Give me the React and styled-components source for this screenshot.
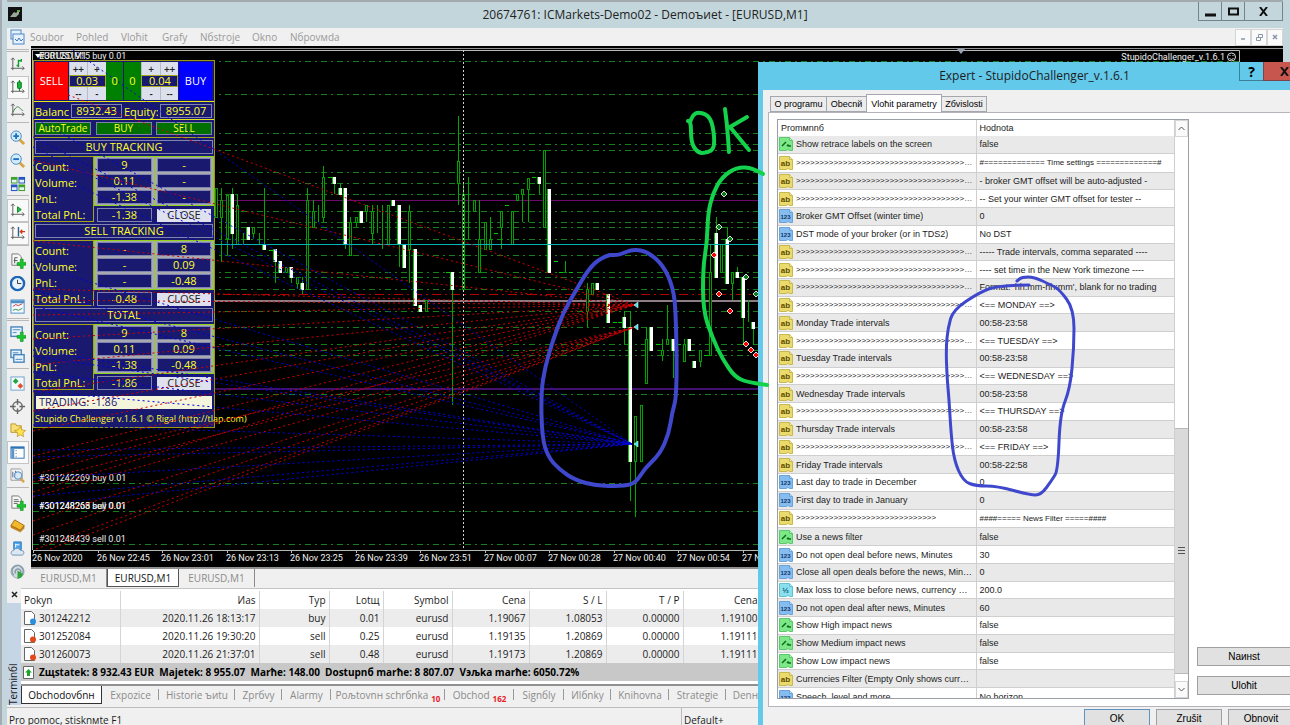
import React from "react";
import styled, { createGlobalStyle, css } from "styled-components";

const GlobalStyle = createGlobalStyle`
  * {
    box-sizing: border-box;
  }
  body {
    margin: 0;
    overflow: hidden;
    font-family: "Open Sans", "Noto Sans", sans-serif;
    font-size: 10px;
    color: #1c1c1c;
  }
  button,
  input {
    font: inherit;
    padding: 0;
    margin: 0;
    border-radius: 0;
  }
  table {
    border-collapse: collapse;
  }
`;

const Desktop = styled.div`
  position: relative;
  height: 100vh;
  overflow: hidden;
`;

const MainWindow = styled.main`
  display: flex;
  flex-direction: column;
  height: 100%;
  padding: 0 7px 0 5px;
  background: #c2d6dc;
  border-left: 2px solid #a4abb2;
`;

const TitleBar = styled.header`
  display: grid;
  grid-template-columns: 90px 1fr 90px;
  flex: none;
  height: 28px;
  border-top: 2px solid #a2aaae;
`;

const AppLogo = styled.svg`
  margin: 5px 0 0 1px;
`;

const WindowTitle = styled.h1`
  margin: 0;
  font-size: 12px;
  line-height: 26px;
  font-weight: 400;
  text-align: center;
  color: #222;
`;

const CaptionButtons = styled.div`
  display: flex;
  height: 19px;
  justify-content: flex-end;
`;

const CaptionButton = styled.button`
  display: flex;
  align-items: center;
  justify-content: center;
  width: ${props => props.$width || 24}px;
  margin-left: -1px;
  background: ${props => props.$bg || "transparent"};
  border: 1px solid ${props => props.$line || "#75838a"};
  border-top: 0;
`;

const MenuBar = styled.nav`
  display: flex;
  flex: none;
  align-items: center;
  height: 18px;
  background: #f0f0f0;
  padding-left: 3px;
`;

const MenuLink = styled.a`
  width: ${props => props.$width}px;
  color: #9a9a9a;
  text-decoration: none;
  font-size: 10px;
  line-height: 18px;
`;

const MdiButtons = styled.div`
  display: flex;
  margin-left: auto;
`;

const MdiButton = styled.button`
  display: flex;
  align-items: center;
  justify-content: center;
  width: 16px;
  height: 17px;
  background: #fafafa;
  border: 1px solid #d5d5d5;
`;

const Workspace = styled.div`
  display: flex;
  flex: 1;
  min-height: 0;
`;

const Toolbar = styled.aside`
  display: flex;
  flex-direction: column;
  flex: none;
  width: 24px;
  padding-top: 3px;
  background: #f0f0f0;
`;

const ToolDivider = styled.div`
  flex: none;
  height: 4px;
  margin-right: 2px;
  border-top: ${props => (props.$grip ? "3px double" : "1px solid")} #b8b8b8;
`;

const ToolButton = styled.button`
  display: flex;
  flex: none;
  align-items: center;
  justify-content: center;
  height: 23px;
  margin-right: 2px;
  background: ${props => (props.$pressed ? "#f9f9f9" : "transparent")};
  border: 1px solid ${props => (props.$pressed ? "#c4c4c4" : "transparent")};
`;

const ChartColumn = styled.section`
  display: flex;
  flex-direction: column;
  flex: 1;
  min-width: 0;
`;

const ChartArea = styled.div`
  position: relative;
  flex: 1;
  min-height: 0;
  overflow: hidden;
  background: #000;
`;

const ChartSvg = styled.svg`
  position: absolute;
  left: 0;
  top: 0;
  pointer-events: none;
  font-family: Roboto, "Open Sans", sans-serif;
`;

const ChartTabs = styled.div`
  display: flex;
  flex: none;
  height: 21px;
  background: #f0f0f0;
  border-top: 2px solid #8f9090;
`;

const ChartTab = styled.button`
  width: ${props => (props.$active ? 72 : 76)}px;
  height: 18px;
  border: 0;
  font-size: 10px;
  color: ${props => (props.$active ? "#111" : "#8b8b8b")};
  background: ${props => (props.$active ? "#fff" : "transparent")};
  ${props =>
    props.$active
      ? css`
          border: 1px solid #555;
          border-top: 0;
        `
      : css`
          border-right: 1px solid #8c8c8c;
        `}
`;

/* ---- trade panel ---- */

const TradePanel = styled.div`
  position: absolute;
  left: 2px;
  top: 14px;
  width: 182px;
  height: 368px;
  background: #191970;
  border: 1px solid #9a9a10;
  color: #ffff28;
  font-size: 11px;
  line-height: 14px;
`;

const PanelStrip = styled.div`
  display: flex;
  align-items: center;
  justify-content: space-between;
  height: ${props => props.$height || 18}px;
  padding: 0 2px 0 1px;
  border-bottom: 1px solid ${props => props.$line || "#e8e81c"};
`;

const DealButton = styled.button`
  width: 33px;
  height: 38px;
  border: 0;
  color: #fff;
  background: ${props => props.$bg};
`;

const ZeroButton = styled.button`
  width: 17px;
  height: 38px;
  border: 0;
  color: #ffff28;
  background: #008000;
`;

const LotBox = styled.div`
  display: grid;
  grid-template-columns: 1fr 1fr;
  grid-template-rows: 13px 12px 13px;
  width: 37px;
  height: 38px;
`;

const StepButton = styled.button`
  border: 0;
  border-left: 1px solid #b9bcc8;
  background: #dcdfec;
  color: #222;
  font-size: 10px;
  font-weight: 600;
  line-height: 10px;
`;

const LotInput = styled.input`
  grid-column: span 2;
  width: 100%;
  min-width: 0;
  border: 1px solid #a7a720;
  background: #191970;
  color: #ffff28;
  text-align: center;
`;

const PanelValue = styled.div`
  width: ${props => (props.$width ? props.$width + "px" : "auto")};
  height: 14px;
  line-height: 12px;
  border: 1px solid #8085b0;
  text-align: center;
  background: #191970;
`;

const PanelLabel = styled.span`
  width: 34px;
  padding-top: 2px;
  overflow: hidden;
`;

const PanelToggle = styled.button`
  width: 56px;
  height: 13px;
  font-size: 10px;
  line-height: 11px;
  border: 1px solid #7c84a8;
  background: #007000;
  color: #ffff28;
`;

const PanelHeading = styled.div`
  height: 18px;
  padding: 2px 1px;
`;

const Stats = styled.div`
  display: grid;
  grid-template-columns: 60px 1fr;
  height: 66px;
`;

const StatLabels = styled.div`
  height: 66px;
  padding: 2px 0 0 1px;
  border: 1px solid #a5a51c;
  border-left: 0;
  line-height: 16px;
  white-space: nowrap;
`;

const StatGrid = styled.div`
  display: grid;
  grid-template-columns: 1fr 1fr;
  height: 50px;
  border: 1px solid #8fd018;
`;

const StatCell = styled.div`
  padding: 1px 2px;
  height: 16px;
  background: ${props => (props.$total ? "transparent" : "#a9a9b0")};
  &:nth-child(even) {
    border-left: 1px solid ${props => (props.$total ? "transparent" : "#8fd018")};
  }
`;

const StatTotals = styled.div`
  display: grid;
  grid-template-columns: 1fr 1fr;
  padding: 1px 1px 0;
`;

const CloseButton = styled.button`
  width: 100%;
  height: 13px;
  line-height: 12px;
  border: 0;
  background: #dfe2ee;
  color: #222;
`;

const TradingState = styled.div`
  height: 13px;
  margin: 6px 2px 0;
  padding-left: 3px;
  line-height: 12px;
  background: #f5f5dc;
  color: #191970;
`;

const PanelCredit = styled.div`
  padding: 3px 1px;
  font-size: 9px;
  white-space: nowrap;
`;

/* ---- terminal ---- */

const Terminal = styled.section`
  display: flex;
  flex: none;
  height: 119px;
  background: #f0f0f0;
`;

const TerminalSide = styled.div`
  display: flex;
  flex-direction: column;
  width: 14px;
  gap: 3px;
`;

const SideClose = styled.button`
  height: 12px;
  border: 0;
  background: none;
  line-height: 8px;
`;

const SideCaption = styled.div`
  flex: 1;
  writing-mode: vertical-rl;
  transform: rotate(180deg);
  line-height: 13px;
  margin-bottom: 2px;
  background: #c5d5e6;
`;

const TerminalBody = styled.div`
  flex: 1;
  min-width: 0;
  overflow: hidden;
  padding-top: 2px;
  background: #fff;
  border-top: 1px solid #c4c4c4;
`;

const OrderTable = styled.table`
  width: 100%;
  table-layout: fixed;
  line-height: 16px;
  th,
  td {
    height: 18px;
    padding: 0 3px;
    text-align: right;
    font-weight: 400;
    white-space: nowrap;
    border-right: 1px solid #d4d4d4;
  }
  th:first-child,
  td:first-child {
    text-align: left;
  }
  tbody tr:nth-child(odd) {
    background: #ececec;
  }
`;

const OrderId = styled.span`
  display: flex;
  align-items: center;
  gap: 3px;
`;

const BalanceRow = styled.div`
  display: flex;
  align-items: center;
  gap: 5px;
  height: 18px;
  padding-left: 2px;
  background: #c8c8c8;
  color: #000;
  font-weight: 700;
  white-space: pre;
`;

const TerminalTabs = styled.div`
  display: flex;
  height: 26px;
  margin-top: 3px;
  background: #f0f0f0;
  border-top: 2px solid #8f9090;
`;

const TerminalTab = styled.button`
  position: relative;
  flex: none;
  width: ${props => props.$width}px;
  height: 18px;
  border: 0;
  color: ${props => (props.$active ? "#111" : "#8b8b8b")};
  background: ${props => (props.$active ? "#fff" : "transparent")};
  ${props =>
    props.$active &&
    css`
      border: 1px solid #333;
      border-top: 0;
    `}
  &:not(:first-child)::after {
    content: "";
    position: absolute;
    right: 0;
    top: 3px;
    height: 11px;
    border-right: 1px solid #999;
  }
  sub {
    margin-left: 3px;
    font-size: 8px;
    font-weight: 700;
    line-height: 8px;
    color: #e8202a;
  }
`;

const StatusBar = styled.footer`
  display: flex;
  flex: none;
  height: 18px;
  background: #f0f0f0;
  border-top: 1px solid #bdbdbd;
  line-height: 25px;
  white-space: nowrap;
  overflow: hidden;
`;

const StatusCell = styled.span`
  width: ${props => props.$width}px;
  padding-left: 2px;
  border-right: 1px solid #bbb;
`;

/* ---- expert dialog ---- */

const Dialog = styled.section`
  position: absolute;
  left: 758px;
  top: 62px;
  width: 548px;
  height: 690px;
  padding-left: 5px;
  background: #63c9ea;
  font-family: "Liberation Sans", sans-serif;
  font-size: 9px;
  color: #1c1c1c;
`;

const DialogTitle = styled.div`
  display: grid;
  grid-template-columns: 68px 1fr 68px;
  height: 28px;
  h2 {
    margin: 0;
    font: 400 12px/27px "Open Sans", "Noto Sans", sans-serif;
    text-align: center;
  }
`;

const HelpMark = styled.b`
  font: 700 14px "Open Sans", sans-serif;
`;

const DialogBody = styled.div`
  height: 662px;
  padding: 4px 0 0 5px;
  background: #f0f0f0;
`;

const DialogTabs = styled.div`
  display: flex;
  align-items: flex-end;
  height: 18px;
  padding-left: 3px;
`;

const DialogTab = styled.button`
  width: ${props => props.$width}px;
  height: ${props => (props.$active ? 18 : 16)}px;
  margin-left: -1px;
  border: 1px solid #a4a8ac;
  border-bottom: ${props => (props.$active ? 0 : "1px solid #a4a8ac")};
  background: ${props => (props.$active ? "#fff" : "#ececec")};
`;

const TabPage = styled.div`
  display: flex;
  gap: 8px;
  height: 595px;
  padding: 6px 0 0 8px;
  background: #fff;
  border: 1px solid #b4b4ba;
`;

const ParamBox = styled.div`
  display: flex;
  width: 412px;
  height: 580px;
  overflow: hidden;
  border: 1px solid #9a9ea6;
`;

const ParamTable = styled.table`
  flex: none;
  width: 396px;
  height: 586px;
  table-layout: fixed;
  th,
  td {
    padding: 0 3px;
    border-right: 1px solid #cfcfcf;
    border-bottom: 1px solid #cfcfcf;
    text-align: left;
    font-weight: 400;
    line-height: 14px;
    overflow: hidden;
    white-space: nowrap;
    text-overflow: ellipsis;
  }
  th {
    height: 16px;
    border-bottom: 0;
  }
  tbody tr:nth-child(odd) {
    background: #e9e9e9;
  }
  td:first-child {
    padding-left: 1px;
  }
`;

const ParamName = styled.span`
  display: flex;
  align-items: center;
  gap: 3px;
`;

const ParamGlyph = styled.svg`
  flex: none;
`;

const ParamText = styled.span`
  overflow: hidden;
  text-overflow: ellipsis;
  font-size: ${props => (props.$ruler ? 8 : 9)}px;
`;

const Scrollbar = styled.div`
  display: flex;
  flex-direction: column;
  width: 14px;
  height: 578px;
  background: #fff;
`;

const ScrollButton = styled.button`
  display: flex;
  align-items: center;
  justify-content: center;
  height: 17px;
  border: 1px solid #d6d6d6;
  background: #fafafa;
`;

const ScrollThumb = styled.div`
  display: flex;
  align-items: center;
  justify-content: center;
  height: 246px;
  margin: 291px 0 auto;
  background: #dadada;
  border-top: 1px solid #b9b9b9;
  border-bottom: 1px solid #b9b9b9;
`;

const SideButtons = styled.div`
  display: flex;
  flex-direction: column;
  justify-content: flex-end;
  gap: 10px;
  padding-bottom: 11px;
`;

const PushButton = styled.button`
  width: ${props => props.$width}px;
  height: 19px;
  border: 1px solid ${props => (props.$primary ? "#5c93c0" : "#a0a0a0")};
  background: #e1e1e1;
  font-size: 10px;
`;

const DialogButtons = styled.div`
  display: flex;
  gap: 6px;
  padding: 2px 0 0 316px;
`;

const Markup = styled.svg`
  position: absolute;
  left: 0;
  top: 0;
  pointer-events: none;
`;

const menu = [
  ["Soubor", 46],
  ["Pohled", 45],
  ["Vloћit", 41],
  ["Grafy", 38],
  ["Nбstroje", 52],
  ["Okno", 38],
  ["Nбpovмda", 60]
];

const orders = [
  ["301242212", "2020.11.26 18:13:17", "buy", "0.01", "eurusd", "1.19067", "1.08053", "0.00000", "1.19100"],
  ["301252084", "2020.11.26 19:30:20", "sell", "0.25", "eurusd", "1.19135", "1.20869", "0.00000", "1.19111"],
  ["301260073", "2020.11.26 21:37:01", "sell", "0.48", "eurusd", "1.19173", "1.20869", "0.00000", "1.19111"]
];

const orderColumns = [
  ["Pokyn", 99],
  ["Иas", 139],
  ["Typ", 70],
  ["Lotщ", 54],
  ["Symbol", 69],
  ["Cena", 77],
  ["S / L", 77],
  ["T / P", 77],
  ["Cena", 78]
];

const terminalTabs = [
  ["Obchodovбnн", 81],
  ["Expozice", 57],
  ["Historie ъиtu", 76],
  ["Zprбvy", 47],
  ["Alarmy", 49],
  ["Poљtovnн schrбnka", 114, "10"],
  ["Obchod", 69, "162"],
  ["Signбly", 50],
  ["Иlбnky", 47],
  ["Knihovna", 58],
  ["Strategie", 57],
  ["Denнk", 44]
];

const arrows = ">".repeat(60);

const params = [
  ["bool", "Show retrace labels on the screen", "false"],
  ["ab", arrows, "#============= Time settings =============#"],
  ["ab", arrows, "- broker GMT offset will be auto-adjusted -"],
  ["ab", arrows, "-- Set your winter GMT offset for tester --"],
  ["int", "Broker GMT Offset (winter time)", "0"],
  ["int", "DST mode of your broker (or in TDS2)", "No DST"],
  ["ab", arrows, "----- Trade intervals, comma separated ----"],
  ["ab", arrows, "---- set time in the New York timezone ----"],
  ["ab", arrows, "Format: 'hh:mm-hh:mm', blank for no trading"],
  ["ab", arrows, "<== MONDAY ==>"],
  ["ab", "Monday Trade intervals", "00:58-23:58"],
  ["ab", arrows, "<== TUESDAY ==>"],
  ["ab", "Tuesday Trade intervals", "00:58-23:58"],
  ["ab", arrows, "<== WEDNESDAY ==>"],
  ["ab", "Wednesday Trade intervals", "00:58-23:58"],
  ["ab", arrows, "<== THURSDAY ==>"],
  ["ab", "Thursday Trade intervals", "00:58-23:58"],
  ["ab", arrows, "<== FRIDAY ==>"],
  ["ab", "Friday Trade intervals", "00:58-22:58"],
  ["int", "Last day to trade in December", "0"],
  ["int", "First day to trade in January", "0"],
  ["ab", ">".repeat(30), "####===== News Filter =====####"],
  ["bool", "Use a news filter", "false"],
  ["int", "Do not open deal before news, Minutes", "30"],
  ["int", "Close all open deals before the news, Minutes", "0"],
  ["half", "Max loss to close before news, currency per lot", "200.0"],
  ["int", "Do not open deal after news, Minutes", "60"],
  ["bool", "Show High impact news", "false"],
  ["bool", "Show Medium impact news", "false"],
  ["bool", "Show Low impact news", "false"],
  ["ab", "Currencies Filter (Empty Only shows currencies)", ""],
  ["int", "Speech, level and more", "No horizon"]
];

// x, high, body top, body bottom, low, filled
const candles = [
  [216, 188, 188, 217, 217], [221, 188, 200, 217, 262], [227, 195, 195, 238, 255],
  [232, 188, 194, 233, 249, 1], [237, 194, 205, 244, 244], [243, 233, 0, 0, 244],
  [248, 227, 227, 239, 239, 1], [253, 227, 227, 233, 239], [259, 233, 0, 0, 244],
  [264, 188, 244, 249, 249, 1], [270, 250, 0, 0, 250], [275, 249, 249, 261, 283, 1],
  [280, 261, 261, 272, 272, 1], [286, 267, 267, 272, 272], [291, 267, 267, 277, 283, 1],
  [297, 277, 277, 283, 289], [302, 277, 283, 289, 294, 1], [307, 188, 200, 289, 289],
  [313, 200, 211, 227, 227], [318, 205, 0, 0, 222], [323, 166, 177, 217, 222],
  [329, 177, 0, 0, 177], [334, 177, 177, 183, 194, 1], [340, 183, 188, 194, 194, 1],
  [345, 188, 188, 244, 249, 1], [350, 217, 222, 255, 255], [356, 217, 217, 222, 227],
  [361, 211, 211, 222, 222, 1], [366, 205, 205, 211, 222], [372, 205, 211, 233, 244],
  [377, 205, 0, 0, 233], [382, 205, 0, 0, 249], [388, 205, 205, 244, 244],
  [393, 200, 200, 205, 205, 1], [399, 205, 205, 244, 267, 1], [404, 244, 244, 267, 267, 1],
  [409, 205, 211, 249, 283], [415, 249, 249, 305, 305, 1], [420, 305, 305, 311, 311, 1],
  [426, 300, 300, 311, 311], [447, 272, 0, 0, 272], [452, 272, 272, 289, 405, 1],
  [458, 116, 161, 183, 205], [463, 183, 194, 289, 289], [468, 177, 0, 0, 239],
  [474, 200, 200, 211, 211], [479, 200, 239, 272, 272], [485, 222, 222, 249, 249],
  [490, 217, 239, 249, 249], [495, 233, 0, 0, 233], [501, 211, 211, 227, 249],
  [506, 205, 0, 0, 205], [512, 211, 211, 244, 244], [517, 194, 194, 200, 200],
  [522, 189, 189, 194, 222], [528, 178, 178, 189, 222], [533, 177, 0, 0, 177],
  [539, 177, 177, 183, 194, 1], [544, 150, 150, 227, 227], [549, 189, 189, 272, 272, 1],
  [555, 261, 0, 0, 261], [560, 272, 0, 0, 272], [565, 261, 0, 0, 272], [570, 272, 0, 0, 272],
  [587, 283, 289, 311, 327], [592, 283, 283, 294, 294], [597, 283, 283, 289, 289, 1],
  [608, 294, 294, 322, 322, 1], [614, 322, 0, 0, 322], [619, 322, 0, 0, 322],
  [624, 311, 317, 327, 345, 1], [630, 311, 327, 461, 501, 1], [635, 416, 416, 461, 517],
  [641, 405, 405, 461, 461], [646, 327, 339, 383, 383], [651, 327, 327, 350, 350, 1],
  [657, 344, 0, 0, 344], [662, 339, 350, 355, 361], [667, 305, 339, 344, 344],
  [673, 339, 339, 350, 378, 1], [678, 344, 0, 0, 344], [684, 339, 344, 361, 361],
  [689, 339, 339, 350, 350, 1], [694, 361, 361, 367, 367, 1], [700, 350, 350, 361, 367],
  [705, 355, 0, 0, 355], [710, 244, 272, 355, 355], [716, 217, 233, 277, 277, 1],
  [721, 244, 244, 272, 272], [727, 227, 239, 283, 283, 1], [732, 272, 272, 283, 300],
  [737, 267, 272, 277, 277, 1], [743, 277, 277, 317, 344, 1], [748, 300, 0, 0, 322],
  [753, 322, 322, 328, 345, 1]
];

const levels = [
  61, 94, 133, 144, 150, 172, 183, 194, 211, 222, 227, 239, 255, 272, 277, 289,
  311, 327, 344, 350, 355, 394, 483, 511, 544
];

// start x, start y of every trade link; each group ends in one point
const links = [
  {
    color: "#d00000",
    end: [635, 305],
    from: [
      [68, 95], [33, 160], [33, 241], [33, 289], [33, 300], [33, 315], [33, 339],
      [33, 365], [33, 392], [33, 411], [33, 431], [33, 456], [33, 475], [33, 492]
    ]
  },
  {
    color: "#d00000",
    end: [635, 327],
    from: [[33, 463], [33, 482], [33, 497], [33, 521], [33, 535], [36, 549], [50, 549]]
  },
  {
    color: "#0000e0",
    end: [632, 444],
    from: [
      [73, 50], [33, 118], [33, 137], [33, 147], [33, 165], [33, 265], [33, 290],
      [33, 306], [33, 350], [33, 356], [33, 372], [33, 391], [33, 425],
      [33, 450], [33, 457], [33, 478], [33, 496], [33, 505]
    ]
  }
];

const times = [
  "26 Nov 2020", "26 Nov 22:45", "26 Nov 23:01", "26 Nov 23:13", "26 Nov 23:25",
  "26 Nov 23:39", "26 Nov 23:51", "27 Nov 00:07", "27 Nov 00:28", "27 Nov 00:40",
  "27 Nov 00:54", "27 Nov 01:10"
];

const diamonds = [
  [724, 194, "#0a7a20"], [719, 227, "#0a7a20"], [730, 239, "#0a7a20"], [746, 277, "#0a7a20"],
  [756, 294, "#0a7a20"], [714, 255, "#f00"], [719, 294, "#f00"], [730, 311, "#f00"],
  [746, 344, "#f00"], [751, 350, "#f00"], [756, 355, "#f00"]
];

const Axes = () => <path d="M3 1v13M1 12h14M1 3l2-2 2 2M13 10l2 2-2 2" stroke="#5c5c5c" fill="none" />;
const Plus = () => <path d="M7.500 10h3.500v-3.500h3v3.500h3v3h-3v3.500h-3v-3.500h-3.500z" fill="#19c52c" stroke="#0b8a1a" strokeWidth=".6" />;

const toolIcons = {
  bars: <><Axes /><path d="M9 3v8M9 4h3M7 9h2M12 2v3" stroke="#12a02c" fill="none" strokeWidth="1.500" /></>,
  candles: <><Axes /><path d="M10 0v12" stroke="#067a1a" /><rect x="8" y="2" width="4" height="7" rx="1" fill="#16b93a" stroke="#067a1a" /></>,
  line: <><Axes /><path d="M3 10c3-6 5-7 7-5s3 3 4 3" stroke="#2f7c3f" fill="none" /></>,
  zoomIn: <><path d="M10 10l5 5" stroke="#d9a441" strokeWidth="3" /><circle cx="6.500" cy="6.500" r="5.500" fill="#d3ecfb" stroke="#3f87c8" /><path d="M6.500 3.500v6M3.500 6.500h6" stroke="#1d6fc0" strokeWidth="2" /></>,
  zoomOut: <><path d="M10 10l5 5" stroke="#d9a441" strokeWidth="3" /><circle cx="6.500" cy="6.500" r="5.500" fill="#d3ecfb" stroke="#3f87c8" /><path d="M3.500 6.500h6" stroke="#1d6fc0" strokeWidth="2" /></>,
  tile: <><rect x="1" y="1" width="7" height="7" fill="#3fa327" /><rect x="9" y="1" width="7" height="7" fill="#2557c4" /><rect x="1" y="9" width="7" height="7" fill="#2557c4" /><rect x="9" y="9" width="7" height="7" fill="#3fa327" /><path d="M2 4h5v3H2zM10 4h5v3h-5zM2 12h5v3H2zM10 12h5v3h-5z" fill="#e8f2fb" /></>,
  scroll: <><Axes /><path d="M8 4l4 3-4 3z" fill="#2bc247" stroke="#0f8a28" /></>,
  shift: <><Axes /><path d="M9 1v10" stroke="#2b5f8c" strokeWidth="1.500" /><path d="M16 6h-5M13 4l-2 2 2 2" stroke="#d23b12" fill="none" strokeWidth="1.500" /></>,
  indicator: <><path d="M2 1h7l3 3v9H2z" fill="#f7f7f7" stroke="#777" /><path d="M5 11V5h3M4 8h4" stroke="#555" fill="none" /><Plus /></>,
  clock: <><circle cx="8" cy="8" r="7" fill="#e9f4fd" stroke="#1c66b5" strokeWidth="2.500" /><path d="M8 4v4h4" stroke="#333" fill="none" /></>,
  template: <><rect x="1" y="1" width="14" height="14" fill="#f3f9fe" stroke="#4c8ec6" /><path d="M1 3h14" stroke="#4c8ec6" strokeWidth="3" /><path d="M3 8l3-2 3 1 4-2" stroke="#c33" fill="none" /><path d="M3 12l3-1 3 1 4-2" stroke="#2a8f3c" fill="none" /></>,
  newChart: <><rect x="1" y="1" width="12" height="10" fill="#e9f3fb" stroke="#4787bd" strokeWidth="1.500" /><path d="M3 4h8M3 7h4" stroke="#4787bd" /><Plus /></>,
  profiles: <><rect x="1" y="1" width="11" height="8" fill="#e9f3fb" stroke="#4787bd" strokeWidth="1.500" /><rect x="4" y="6" width="11" height="8" fill="#e9f3fb" stroke="#4787bd" strokeWidth="1.500" /><path d="M6 11h7M3 4h6" stroke="#4787bd" /></>,
  market: <><rect x="1" y="1" width="14" height="14" fill="#f4f9fd" stroke="#6ea3cf" /><path d="M6 2.500l3 3L6 8.500 3 5.500z" fill="#21a63b" /><path d="M11 7.500l3 3-3 3-3-3z" fill="#e0532c" /></>,
  cross: <><circle cx="8" cy="8" r="5" fill="none" stroke="#666" strokeWidth="1.500" /><path d="M8 0v6M8 10v6M0 8h6M10 8h6" stroke="#666" strokeWidth="1.500" /></>,
  navigator: <><path d="M1 2h5l1 2h5v7H1z" fill="#f7df7c" stroke="#bf962a" /><path d="M11 5l1.700 3.500 3.800.5-2.800 2.600.7 3.900-3.400-1.900-3.400 1.900.7-3.900L4.500 9l3.800-.5z" fill="#ffe24b" stroke="#b98a17" strokeWidth=".7" /></>,
  terminal: <><rect x="1" y="2" width="14" height="12" fill="#fff" stroke="#2f75b5" /><path d="M1 3h14" stroke="#2f75b5" strokeWidth="2" /><path d="M3 4v10" stroke="#5b95cc" strokeWidth="3" /><path d="M6 6h1M6 9h1M6 12h1" stroke="#555" /></>,
  tester: <><path d="M1 1h10l2 2v10H1z" fill="#f4f4f4" stroke="#999" /><path d="M3 4v6M6 3v7" stroke="#558" /><path d="M11 11l4 4" stroke="#d9a441" strokeWidth="2.500" /><circle cx="8.500" cy="8" r="4" fill="#cfe6f8" fillOpacity=".8" stroke="#4b8cc4" /></>,
  order: <><path d="M2 1h7l3 3v10H2z" fill="#f7f7f7" stroke="#777" /><path d="M4 5h5M4 7h6M4 9h4" stroke="#666" /><Plus /></>,
  editor: <><path d="M5 2l10 6-4 5L1 8z" fill="#f2b92d" stroke="#a06b0a" /><path d="M1 8l10 5 4-5v3l-4 4L1 10z" fill="#c8861a" stroke="#a06b0a" strokeWidth=".5" /></>,
  cloud: <><path d="M4 1h8v8H4z" fill="#4ea5ea" stroke="#2b78bd" /><path d="M6 3v4M6 4h4" stroke="#fff" /><path d="M3 15c-3-1-2-5 1-5 1-3 6-3 7 0 4-1 5 4 2 5z" fill="#dbe7f3" stroke="#6d93b8" /></>,
  signal: <><circle cx="8" cy="8" r="7" fill="#cfd9de" stroke="#9fb0ba" /><path d="M4 12a6 6 0 1 1 9-1M6 10a3 3 0 1 1 5 0" fill="none" stroke="#7f97a5" strokeWidth="1.300" /><path d="M8 7v9a8 8 0 0 0 6-5z" fill="#2fa43b" /></>
};

const tools = [
  ["bars"], ["candles", 1], ["line"], "-",
  ["zoomIn"], ["zoomOut"], ["tile"], "-",
  ["scroll", 1], ["shift", 1], "-",
  ["indicator"], ["clock"], ["template"], "=",
  ["newChart"], ["profiles"], "-",
  ["market"], ["cross"], ["navigator"], ["terminal", 1], ["tester"], "-",
  ["order"], ["editor"], ["cloud"], ["signal"]
];

const paramColors = {
  ab: ["#eadb6c", "#c9b84e", "#5c4c00"],
  int: ["#86bdf0", "#6ba3d8", "#0e3568"],
  bool: ["#7de888", "#5cc86c", "#0c6a1c"],
  half: ["#8ae0ee", "#64bfce", "#0d5c72"]
};

function ParamIcon({ kind }) {
  const [fill, line, ink] = paramColors[kind];
  const label = { ab: "ab", int: "123", half: "½" }[kind];
  return (
    <ParamGlyph width="14" height="14" viewBox="0 0 14 14">
      <path d="M.5.5h10l3 3v10H11l-2-1-2 1H.5z" fill={fill} stroke={line} />
      <path d="M10.500.5v3h3" fill="#fff" fillOpacity=".5" stroke={line} />
      {kind === "bool" ? (
        <path d="M3 9l4-4M8 9l1-1 1 1h2" stroke={ink} strokeWidth="1.500" fill="none" />
      ) : (
        <text x="6.500" y="10" textAnchor="middle" fontSize={kind === "int" ? 6 : 8} fontWeight="700" fill={ink} fontFamily="Liberation Sans">
          {label}
        </text>
      )}
    </ParamGlyph>
  );
}

function Candle({ data }) {
  const [x, high, top, bottom, low, filled] = data;
  return (
    <g stroke="#00c800" shapeRendering="crispEdges">
      {high === low ? (
        <path d={`M${x - 1} ${high + 0.5}h4`} />
      ) : (
        <path d={`M${x + 0.5} ${high}V${low}`} stroke="#00a800" />
      )}
      {top > 0 && (
        <rect x={x - 0.5} y={top + 0.5} width="2" height={bottom - top} fill={filled ? "#fff" : "#000"} stroke={filled ? "#fff" : "#00a000"} />
      )}
      {filled && <path d={`M${x - 1.5} ${top}V${bottom + 1}`} stroke="#00c800" />}
    </g>
  );
}

function Chart() {
  return (
    <ChartSvg width="1252" height="521" viewBox="31 46 1252 521">
      <path d="M31 48.500H1283" stroke="#8f9396" strokeWidth="1" />
      <path d="M32.500 550V50M33 50.500H1239.500V567" stroke="#b8b8b8" fill="none" />
      {levels.map(y => (
        <path key={y} d={`M33 ${y + 0.5}H1239`} stroke="#158018" strokeDasharray="6 4 2 4" />
      ))}
      <path d="M33 294.500H1239" stroke="#b40000" strokeDasharray="9 4 2 4" />
      <path d="M33 200.500H1239" stroke="#6e0a6e" />
      <path d="M33 301H1239" stroke="#8d7c86" strokeWidth="2" />
      <path d="M33 389H1239" stroke="#42116e" strokeWidth="2" />
      {candles.map(candle => (
        <Candle key={candle[0]} data={candle} />
      ))}
      <path d="M33 244.500H1239" stroke="#00b4b4" />
      <path d="M463.500 50V549" stroke="#d0d0d0" strokeDasharray="2 2" />
      <path d="M33 550.500H1239" stroke="#b8b8b8" />
      <path d="M957 49h8l-4 5z" fill="#9aa4b4" />
      <g fill="#f0f0f0" fontSize="9">
        <path d="M35 54h6l-3 4z" fill="#fff" />
        <text x="39" y="59">EURUSD,M1</text>
        <text x="39" y="59">#301251915 buy 0.01</text>
        <text x="39" y="481">#301242269 buy 0.01</text>
        <text x="39" y="509">#301248268 buy 0.01</text>
        <text x="39" y="509">#301248265 sell 0.01</text>
        <text x="39" y="542">#301248439 sell 0.01</text>
        <text x="1225" y="60" textAnchor="end">StupidoChallenger_v.1.6.1</text>
        {times.map((time, i) => (
          <text key={time} x={32 + Math.round(i * 64.5)} y="561">{time}</text>
        ))}
      </g>
      {times.map((time, i) => (
        <path key={time} d={`M${33.5 + Math.round(i * 64.5)} 550v3`} stroke="#b8b8b8" />
      ))}
      <g stroke="#ddd" fill="none">
        <circle cx="1231.500" cy="57" r="4" />
        <path d="M1229.500 58.500q2 2 4 0M1230 55v1M1233 55v1" />
      </g>
    </ChartSvg>
  );
}

function TradeLinks() {
  return (
    <ChartSvg width="1252" height="521" viewBox="31 46 1252 521">
      {links.map(group =>
        group.from.map(([x, y]) => (
          <path
            key={`${x}-${y}`}
            d={`M${x} ${y}L${group.end[0]} ${group.end[1]}`}
            stroke={group.color}
            strokeDasharray="2 3"
          />
        ))
      )}
      {[305, 327, 444].map(y => (
        <path key={y} d={`M634 ${y}l4-3v6z`} fill="#38e8f4" stroke="#fff" strokeWidth=".5" />
      ))}
      {diamonds.map(([x, y, color]) => (
        <path key={`${x}-${y}`} d={`M${x - 3} ${y}l3-3 3 3-3 3z`} fill={color} stroke="#ddd" />
      ))}
    </ChartSvg>
  );
}

function LotControl({ value, label, reversed }) {
  const step = reversed ? ["+", "++", "-", "--"] : ["++", "+", "--", "-"];
  return (
    <LotBox>
      <StepButton>{step[0]}</StepButton>
      <StepButton>{step[1]}</StepButton>
      <LotInput aria-label={label} defaultValue={value} />
      <StepButton>{step[2]}</StepButton>
      <StepButton>{step[3]}</StepButton>
    </LotBox>
  );
}

function StatBlock({ title, cells, total }) {
  return (
    <>
      <PanelHeading>
        <PanelValue>{title}</PanelValue>
      </PanelHeading>
      <Stats>
        <StatLabels>
          Count:
          <br />
          Volume:
          <br />
          PnL:
          <br />
          Total PnL:
        </StatLabels>
        <div>
          <StatGrid>
            {cells.map((cell, i) => (
              <StatCell key={i}>
                <PanelValue>{cell}</PanelValue>
              </StatCell>
            ))}
          </StatGrid>
          <StatTotals>
            <StatCell $total>
              <PanelValue>{total}</PanelValue>
            </StatCell>
            <StatCell $total>
              <CloseButton>CLOSE</CloseButton>
            </StatCell>
          </StatTotals>
        </div>
      </Stats>
    </>
  );
}

function Panel() {
  return (
    <TradePanel>
      <PanelStrip $height={41}>
        <DealButton $bg="#f00">SELL</DealButton>
        <LotControl value="0.03" label="Sell lots" />
        <ZeroButton>0</ZeroButton>
        <ZeroButton>0</ZeroButton>
        <LotControl value="0.04" label="Buy lots" reversed />
        <DealButton $bg="#00f">BUY</DealButton>
      </PanelStrip>
      <PanelStrip>
        <PanelLabel>Balance:</PanelLabel>
        <PanelValue $width={51}>8932.43</PanelValue>
        <PanelLabel>Equity:</PanelLabel>
        <PanelValue $width={52}>8955.07</PanelValue>
      </PanelStrip>
      <PanelStrip $line="#a5a51c">
        <PanelToggle>AutoTrade</PanelToggle>
        <PanelToggle>BUY</PanelToggle>
        <PanelToggle>SELL</PanelToggle>
      </PanelStrip>
      <StatBlock title="BUY TRACKING" cells={["9", "-", "0.11", "-", "-1.38", "-"]} total="-1.38" />
      <StatBlock title="SELL TRACKING" cells={["-", "8", "-", "0.09", "-", "-0.48"]} total="-0.48" />
      <StatBlock title="TOTAL" cells={["9", "8", "0.11", "0.09", "-1.38", "-0.48"]} total="-1.86" />
      <TradingState>TRADING: -1.86</TradingState>
      <PanelCredit>Stupido Challenger v.1.6.1 © Rigal (http://tlap.com)</PanelCredit>
    </TradePanel>
  );
}

function TerminalPane() {
  return (
    <Terminal>
      <TerminalSide>
        <SideClose aria-label="Close terminal">
          <svg width="7" height="7" viewBox="0 0 7 7">
            <path d="M1 1l5 5M6 1L1 6" stroke="#222" strokeWidth="1.500" />
          </svg>
        </SideClose>
        <SideCaption>Terminбl</SideCaption>
      </TerminalSide>
      <TerminalBody>
        <OrderTable>
          <colgroup>
            {orderColumns.map(([name, width], i) => (
              <col key={name + i} width={width} />
            ))}
            <col />
          </colgroup>
          <thead>
            <tr>
              {orderColumns.map(([name], i) => (
                <th key={name + i}>{name}</th>
              ))}
              <th />
            </tr>
          </thead>
          <tbody>
            {orders.map(order => (
              <tr key={order[0]}>
                {order.map((cell, i) => (
                  <td key={i}>
                    {i === 0 ? (
                      <OrderId>
                        <svg width="12" height="14" viewBox="0 0 12 14">
                          <path d="M.5.5h7l3 3v10h-10z" fill="#fff" stroke="#666" />
                          <circle cx="9" cy="10.500" r="3" fill={order[2] === "buy" ? "#2b8fdc" : "#e24a1c"} />
                        </svg>
                        {cell}
                      </OrderId>
                    ) : (
                      cell
                    )}
                  </td>
                ))}
                <td />
              </tr>
            ))}
          </tbody>
        </OrderTable>
        <BalanceRow>
          <svg width="11" height="13" viewBox="0 0 11 13">
            <path d="M.5.5h10v12H.5z" fill="#fff" stroke="#666" />
            <path d="M5.500 3L9 6.500H7V10H4V6.500H2z" fill="#1ea32c" />
          </svg>
          {"Zщstatek: 8 932.43 EUR  Majetek: 8 955.07  Marћe: 148.00  Dostupnб marћe: 8 807.07  Vэљka marћe: 6050.72%"}
        </BalanceRow>
        <TerminalTabs>
          {terminalTabs.map(([name, width, count], i) => (
            <TerminalTab key={name} $width={width} $active={i === 0}>
              {name}
              {count && <sub>{count}</sub>}
            </TerminalTab>
          ))}
        </TerminalTabs>
      </TerminalBody>
    </Terminal>
  );
}

function ExpertDialog() {
  return (
    <Dialog>
      <DialogTitle>
        <span />
        <h2>Expert - StupidoChallenger_v.1.6.1</h2>
        <CaptionButtons>
          <CaptionButton $width={25} $line="#3c7f98" aria-label="Help">
            <HelpMark>?</HelpMark>
          </CaptionButton>
          <CaptionButton $width={43} $bg="#c6564e" $line="#7c4448" aria-label="Close">
            <svg width="9" height="9" viewBox="0 0 9 9">
              <path d="M1 0l7 9M8 0L1 9" stroke="#111" strokeWidth="2" />
            </svg>
          </CaptionButton>
        </CaptionButtons>
      </DialogTitle>
      <DialogBody>
        <DialogTabs>
          <DialogTab $width={57}>O programu</DialogTab>
          <DialogTab $width={41}>Obecnй</DialogTab>
          <DialogTab $width={76} $active>Vloћit parametry</DialogTab>
          <DialogTab $width={46}>Zбvislosti</DialogTab>
        </DialogTabs>
        <TabPage>
          <ParamBox>
            <ParamTable>
              <colgroup>
                <col width="198" />
                <col width="198" />
              </colgroup>
              <thead>
                <tr>
                  <th>Promмnnб</th>
                  <th>Hodnota</th>
                </tr>
              </thead>
              <tbody>
                {params.map(([kind, name, value], i) => (
                  <tr key={i}>
                    <td>
                      <ParamName>
                        <ParamIcon kind={kind} />
                        <ParamText $ruler={name[0] === ">"}>{name}</ParamText>
                      </ParamName>
                    </td>
                    <td>
                      <ParamText $ruler={value[0] === "#"}>{value}</ParamText>
                    </td>
                  </tr>
                ))}
              </tbody>
            </ParamTable>
            <Scrollbar>
              <ScrollButton aria-label="Scroll up">
                <svg width="7" height="5" viewBox="0 0 7 5">
                  <path d="M.5 4l3-3 3 3" fill="none" stroke="#555" />
                </svg>
              </ScrollButton>
              <ScrollThumb>
                <svg width="7" height="8" viewBox="0 0 7 8">
                  <path d="M0 .5h7M0 3.500h7M0 6.500h7" stroke="#555" />
                </svg>
              </ScrollThumb>
              <ScrollButton aria-label="Scroll down">
                <svg width="7" height="5" viewBox="0 0 7 5">
                  <path d="M.5 1l3 3 3-3" fill="none" stroke="#555" />
                </svg>
              </ScrollButton>
            </Scrollbar>
          </ParamBox>
          <SideButtons>
            <PushButton $width={94}>Naинst</PushButton>
            <PushButton $width={94}>Uloћit</PushButton>
          </SideButtons>
        </TabPage>
        <DialogButtons>
          <PushButton $width={66} $primary>OK</PushButton>
          <PushButton $width={66}>Zrušit</PushButton>
          <PushButton $width={66}>Obnovit</PushButton>
        </DialogButtons>
      </DialogBody>
    </Dialog>
  );
}

const strokes = [
  ["#3f48cc", [[610, 255], [600, 258], [588, 270], [575, 292], [563, 313], [553, 340], [545, 367], [541, 393], [542, 437], [548, 457], [560, 470], [575, 480], [597, 486], [620, 486], [635, 484], [645, 468], [660, 454], [669, 433], [672, 413], [677, 395], [676, 313], [673, 287], [663, 265], [648, 252], [633, 249], [619, 255], [610, 255]]],
  ["#3f48cc", [[1029, 285], [1000, 285], [980, 292], [953, 310], [948, 328], [946, 348], [947, 377], [949, 399], [951, 433], [954, 460], [963, 481], [976, 486], [997, 486], [1030, 495], [1041, 495], [1052, 480], [1058, 470], [1060, 414], [1070, 389], [1074, 348], [1074, 309], [1059, 289], [1051, 285], [1034, 277], [1022, 277], [1017, 281]]],
  ["#14d24b", [[688, 121], [691, 120], [691, 143], [698, 153], [707, 153], [715, 148], [713, 125], [708, 115], [698, 112], [693, 115], [690, 122]]],
  ["#14d24b", [[725, 109], [727, 123], [729, 152]]],
  ["#14d24b", [[747, 117], [730, 127]]],
  ["#14d24b", [[730, 127], [749, 150]]],
  ["#14d24b", [[763, 174], [753, 168], [737, 167], [722, 177], [713, 193], [708, 213], [707, 243], [703, 267], [703, 310], [712, 337], [723, 360], [735, 377], [747, 382], [767, 385]]]
];

// pen stroke through the midpoints of its points
function penPath(points) {
  let d = `M${points[0].join(" ")}`;
  for (let i = 1; i < points.length - 1; i++) {
    const [x, y] = points[i];
    const [nx, ny] = points[i + 1];
    d += `Q${x} ${y} ${(x + nx) / 2} ${(y + ny) / 2}`;
  }
  return d + `L${points[points.length - 1].join(" ")}`;
}

function Drawings() {
  return (
    <Markup width="1290" height="725" fill="none" strokeLinecap="round" strokeLinejoin="round">
      {strokes.map(([color, points], i) => (
        <path key={i} d={penPath(points)} stroke={color} strokeWidth={i === 1 ? 3 : 4} />
      ))}
    </Markup>
  );
}

export default function App() {
  return (
    <Desktop>
      <GlobalStyle />
      <MainWindow>
        <TitleBar>
          <AppLogo width="14" height="14" viewBox="0 0 14 14">
            <path d="M0 0h14v14H0z" fill="#111" />
            <path d="M2 10l4-5 2 1 3-3v4l-3 3z" fill="#9aa89a" />
            <path d="M9 3h3v2H9z" fill="#5fa83a" />
          </AppLogo>
          <WindowTitle>20674761: ICMarkets-Demo02 - Demoъиet - [EURUSD,M1]</WindowTitle>
          <CaptionButtons>
            <CaptionButton aria-label="Minimize">
              <svg width="11" height="11" viewBox="0 0 11 11"><path d="M0 9h11" stroke="#111" strokeWidth="3" /></svg>
            </CaptionButton>
            <CaptionButton aria-label="Maximize">
              <svg width="11" height="9" viewBox="0 0 11 9"><path d="M1 1.500h9v6H1z" fill="none" stroke="#111" strokeWidth="2" /></svg>
            </CaptionButton>
            <CaptionButton $width={39} aria-label="Close">
              <svg width="9" height="9" viewBox="0 0 9 9"><path d="M1 0l7 9M8 0L1 9" stroke="#111" strokeWidth="2" /></svg>
            </CaptionButton>
          </CaptionButtons>
        </TitleBar>
        <MenuBar>
          <svg width="20" height="16" viewBox="0 0 20 16">
            <rect x="1" y="1" width="10" height="9" fill="#e6f1fb" stroke="#4a86c8" />
            <rect x="3" y="5" width="11" height="10" fill="#e6f1fb" stroke="#4a86c8" />
            <path d="M5 10l2 2 2-3 2 3 2-2" fill="none" stroke="#3a76b8" />
          </svg>
          {menu.map(([name, width]) => (
            <MenuLink key={name} href="#" $width={width}>{name}</MenuLink>
          ))}
          <MdiButtons>
            <MdiButton aria-label="Minimize chart">
              <svg width="6" height="6" viewBox="0 0 6 6"><path d="M1 5h4" stroke="#8797a8" strokeWidth="1.500" /></svg>
            </MdiButton>
            <MdiButton aria-label="Restore chart">
              <svg width="7" height="7" viewBox="0 0 7 7"><path d="M2.500.5h4v3h-4zM.5 3.500h4v3h-4z" fill="none" stroke="#8797a8" /></svg>
            </MdiButton>
            <MdiButton aria-label="Close chart">
              <svg width="6" height="6" viewBox="0 0 6 6"><path d="M1 1l4 4M5 1L1 5" stroke="#8797a8" strokeWidth="1.500" /></svg>
            </MdiButton>
          </MdiButtons>
        </MenuBar>
        <Workspace>
          <Toolbar>
            <ToolDivider $grip />
            {tools.map((tool, i) =>
              typeof tool === "string" ? (
                <ToolDivider key={i} $grip={tool === "="} />
              ) : (
                <ToolButton key={i} $pressed={tool[1]} aria-label={tool[0]}>
                  <svg width="16" height="16" viewBox="0 0 17 17">{toolIcons[tool[0]]}</svg>
                </ToolButton>
              )
            )}
          </Toolbar>
          <ChartColumn>
            <ChartArea>
              <Chart />
              <Panel />
              <TradeLinks />
            </ChartArea>
            <ChartTabs>
              <ChartTab>EURUSD,M1</ChartTab>
              <ChartTab $active>EURUSD,M1</ChartTab>
              <ChartTab>EURUSD,M1</ChartTab>
            </ChartTabs>
          </ChartColumn>
        </Workspace>
        <TerminalPane />
        <StatusBar>
          <StatusCell $width={675}>Pro pomoc, stisknмte F1</StatusCell>
          <StatusCell $width={200}>Default+</StatusCell>
        </StatusBar>
      </MainWindow>
      <ExpertDialog />
      <Drawings />
    </Desktop>
  );
}
